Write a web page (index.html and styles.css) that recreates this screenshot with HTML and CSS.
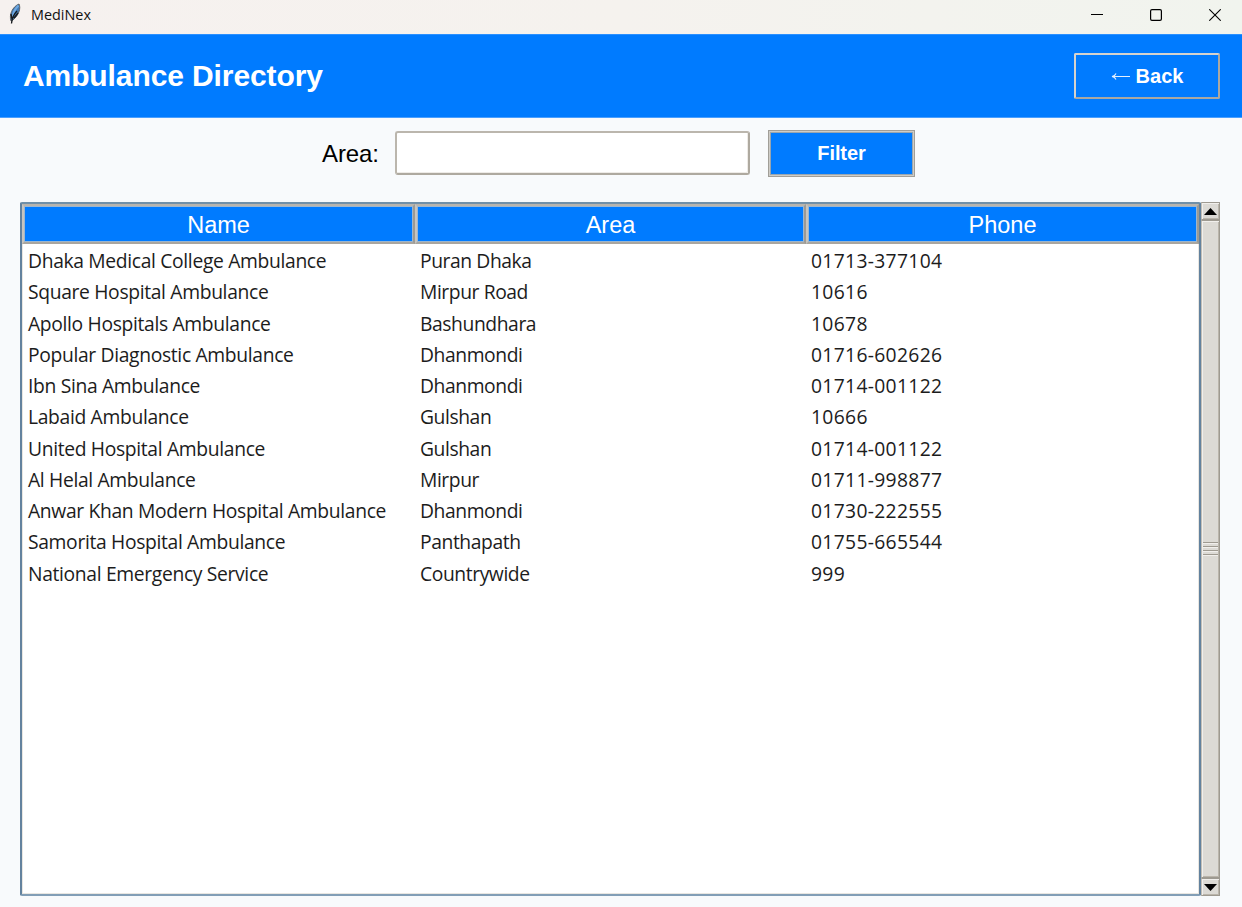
FILE: index.html
```html
<!DOCTYPE html>
<html lang="en">
<head>
<meta charset="utf-8">
<title>MediNex</title>
<link rel="stylesheet" href="styles.css">
</head>
<body>
<div class="titlebar">
  <svg class="feather" width="14" height="22" viewBox="0 0 14 22">
    <path d="M3 18 C1 12 4 4 11 1 C13 5 11 12 5 17Z" fill="#3f78b5" stroke="#5c6064" stroke-width="1"/>
    <path d="M5 14 C5 10 8 5 10.500 2.500" fill="none" stroke="#6fa8e0" stroke-width="2.200"/>
    <path d="M3.5 20.5 C4 15 6 11 9 8 M3 11 L4 16 M10 10 L6 15" fill="none" stroke="#16191d" stroke-width="1.3"/>
  </svg>
  <span class="app-name">MediNex</span>
  <div class="controls">
    <svg width="12" height="12" viewBox="0 0 12 12"><path d="M0 5.5H12" stroke="#000"/></svg>
    <svg width="12" height="12" viewBox="0 0 12 12"><rect x=".6" y=".6" width="10.8" height="10.8" rx="1.4" fill="none" stroke="#000" stroke-width="1.2"/></svg>
    <svg width="12" height="12" viewBox="0 0 12 12"><path d="M.3.3L11.7 11.7M11.7.3L.3 11.7" stroke="#000" stroke-width="1.1"/></svg>
  </div>
</div>
<header class="header">
  <h1 class="heading">Ambulance Directory</h1>
  <button class="back"><svg class="arrow" width="20" height="10" viewBox="0 0 20 10"><path d="M1 5.500H19M5 2.500Q4 5 1 5.500Q4 6 5 8.500" fill="none" stroke="#e4f0ff" stroke-width="1.1"/></svg><span>Back</span></button>
</header>
<main>
  <div class="filters">
    <label class="label" for="area">Area:</label>
    <input class="entry" id="area" type="text">
    <button class="filter">Filter</button>
  </div>
  <div class="list">
    <div class="tree">
      <div class="row head"><div class="th">Name</div><div class="th">Area</div><div class="th">Phone</div></div>
      <div class="body">
        <div class="row"><span class="name">Dhaka Medical College Ambulance</span><span class="area">Puran Dhaka</span><span class="phone">01713-377104</span></div>
        <div class="row"><span class="name">Square Hospital Ambulance</span><span class="area">Mirpur Road</span><span class="phone">10616</span></div>
        <div class="row"><span class="name">Apollo Hospitals Ambulance</span><span class="area">Bashundhara</span><span class="phone">10678</span></div>
        <div class="row"><span class="name">Popular Diagnostic Ambulance</span><span class="area">Dhanmondi</span><span class="phone">01716-602626</span></div>
        <div class="row"><span class="name">Ibn Sina Ambulance</span><span class="area">Dhanmondi</span><span class="phone">01714-001122</span></div>
        <div class="row"><span class="name">Labaid Ambulance</span><span class="area">Gulshan</span><span class="phone">10666</span></div>
        <div class="row"><span class="name">United Hospital Ambulance</span><span class="area">Gulshan</span><span class="phone">01714-001122</span></div>
        <div class="row"><span class="name">Al Helal Ambulance</span><span class="area">Mirpur</span><span class="phone">01711-998877</span></div>
        <div class="row"><span class="name">Anwar Khan Modern Hospital Ambulance</span><span class="area">Dhanmondi</span><span class="phone">01730-222555</span></div>
        <div class="row"><span class="name">Samorita Hospital Ambulance</span><span class="area">Panthapath</span><span class="phone">01755-665544</span></div>
        <div class="row"><span class="name">National Emergency Service</span><span class="area">Countrywide</span><span class="phone">999</span></div>
      </div>
    </div>
    <div class="scrollbar">
      <div class="step"><svg width="13" height="7" viewBox="0 0 13 7"><path d="M6.500 0L13 7H0Z"/></svg></div>
      <div class="thumb"><div class="grip"><i></i><i></i><i></i><i></i></div></div>
      <div class="step"><svg width="13" height="7" viewBox="0 0 13 7"><path d="M0 0H13L6.500 7Z"/></svg></div>
    </div>
  </div>
</main>
</body>
</html>
```
FILE: styles.css
```css
* { box-sizing: border-box; }
body {
  margin: 0;
  height: 907px;
  display: flex;
  flex-direction: column;
  overflow: hidden;
  background: #f8fafc;
  font-family: "Liberation Sans", Arial, sans-serif;
}
.titlebar {
  height: 34px;
  flex: none;
  display: flex;
  align-items: flex-start;
  padding: 3px 21px 0 8px;
  background: linear-gradient(90deg, #f6f1ef, #f5f2ee 50%, #f1f4ee);
}
.app-name {
  margin: 2px 0 0 9px;
  font: 14.4px/20px "Open Sans", "Noto Sans", sans-serif;
  color: #111;
}
.controls { display: flex; gap: 47px; margin: 6px 0 0 auto; }
.header {
  height: 84px;
  flex: none;
  display: flex;
  justify-content: space-between;
  padding: 19px 22px 0 23px;
  background: #007bff;
  border-top: 1px solid #2a90ff;
  border-bottom: 1px solid #4a9fff;
}
.heading {
  margin: 5px 0 0;
  font-size: 30px;
  line-height: 34px;
  letter-spacing: -.1px;
  color: #fff;
}
button {
  font: bold 20px/24px "Liberation Sans", Arial, sans-serif;
  color: #fff;
  background: #007bff;
  padding: 0;
}
.back {
  width: 146px;
  height: 46px;
  margin-top: -1px;
  display: flex;
  align-items: center;
  justify-content: center;
  gap: 5px;
  border: 2px solid;
  border-color: #d6d3cd #aaa8a2 #aaa8a2 #d6d3cd;
  border-radius: 2px;
}
main {
  flex: 1;
  display: flex;
  flex-direction: column;
  padding: 12px 22px 11px 20px;
}
.filters { display: flex; height: 72px; flex: none; padding-left: 302px; }
.label { width: 73px; padding-top: 10px; font-size: 24px; line-height: 28px; letter-spacing: -.1px; }
.entry {
  width: 355px;
  height: 44px;
  margin: 1px 18px 0 0;
  border: 2px solid;
  border-color: #bbb6ad #aea99f #aea99f #bbb6ad;
  border-radius: 3px;
  box-shadow: inset -1px -1px #eeebe7;
  background: #fff;
}
.filter {
  width: 147px;
  height: 47px;
  padding-bottom: 1px;
  letter-spacing: -.1px;
  border: 1px solid #a19e98;
  box-shadow: inset 0 0 0 1px #cfccc6, inset 0 0 0 2px #98a5b0;
}
.list { display: flex; flex: 1; }
.tree {
  width: 1181px;
  border: 2px solid;
  border-color: #7190a8 #63829e #829eb6 #63829e;
  border-radius: 2px;
  box-shadow: inset 1px 1px #e8e6e1, inset -1px -1px #e8e6e1;
  background: #fff;
}
.row { display: grid; grid-template-columns: 392px 391px 1fr; }
.head { grid-template-columns: 393px 391px 1fr; }
.th {
  height: 40px;
  padding-top: 6px;
  border: 2px solid;
  border-color: #b8b4ad #9c9a94 #aaa69f #c7c4be;
  box-shadow: inset 0 0 0 1px #9cb6cf;
  background: #007bff;
  color: #fff;
  text-align: center;
  font-size: 23.500px;
  line-height: 27px;
}
.body { padding: 1px 0 0 6px; }
.body .row {
  height: 31.25px;
  font: 19.300px/31.25px "Open Sans", "Noto Sans", sans-serif;
  color: #1c1c1c;
  white-space: nowrap;
}
.name { letter-spacing: -.34px; }
.area { letter-spacing: -.42px; }
.phone { letter-spacing: .32px; }
.scrollbar { width: 19px; display: flex; flex-direction: column; }
.step, .thumb {
  display: flex;
  align-items: center;
  justify-content: center;
  background: #dcdad5;
  border: 1px solid #9e9a91;
  border-left-color: #c2beb6;
  box-shadow: inset 1px 1px #f1efec, inset -1px -1px #bab5ab;
}
.step { height: 18px; flex: none; }
.thumb { flex: 1; }
.grip { display: grid; gap: 2px; width: 15px; }
.grip i { height: 2px; border-top: 1px solid #9e9a91; background: #f1efec; }
```
